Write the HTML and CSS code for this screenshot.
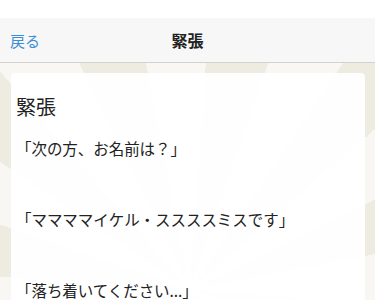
FILE: index.html
```html
<!DOCTYPE html>
<html lang="ja">
<head>
    <meta charset="UTF-8">
    <title>緊張</title>
    <link rel="stylesheet" href="styles.css">
</head>
<body>
<div class="page">
    <div class="status"></div>
    <div class="nav">
        <a class="back" href="#">戻る</a>
        <div class="title">緊張</div>
    </div>
    <div class="content">
        <div class="card">
            <h1 class="card-title">緊張</h1>
            <p class="line">「次の方、お名前は？」</p>
            <p class="line">「ママママイケル・ススススミスです」</p>
            <p class="line">「落ち着いてください...」</p>
        </div>
    </div>
</div>
</body>
</html>
```

FILE: styles.css
```css
*{margin: 0;padding: 0;box-sizing: border-box;}

body{
    font-family: "Noto Sans CJK JP", "Noto Sans", sans-serif;
    color: #222;
    overflow: hidden;
}
.page{
    width: 375px;
    height: 300px;
    display: flex;
    flex-direction: column;
    background: repeating-conic-gradient(from 4deg at 190px 290px, #eeebe1 0deg 15deg, #f8f7f3 15deg 30deg);
    overflow: hidden;
}
.status{
    flex-shrink: 0;
    height: 18px;
    background: #fff;
}
.nav{
    flex-shrink: 0;
    position: relative;
    height: 45px;
    background: #f7f7f7;
    border-bottom: 1px solid #d2d2d2;
    display: flex;
    align-items: center;
    justify-content: center;
}
.nav .back{
    position: absolute;
    left: 10px;
    top: 12px;
    font-size: 15px;
    color: #3b8ed6;
    text-decoration: none;
}
.nav .title{
    font-size: 16px;
    font-weight: bold;
    color: #222;
}
.content{
    flex-shrink: 0;
    padding: 10px 10px 0 11px;
}
.card{
    background: rgba(255, 255, 255, .94);
    border-radius: 4px;
    padding: 20px 5px 0;
    height: 300px;
}
.card-title{
    font-size: 20px;
    font-weight: normal;
    line-height: 28px;
    margin-bottom: 17px;
}
.line{
    font-size: 15.5px;
    line-height: 20px;
    margin-bottom: 51px;
    letter-spacing: -0.05px;
}
```
